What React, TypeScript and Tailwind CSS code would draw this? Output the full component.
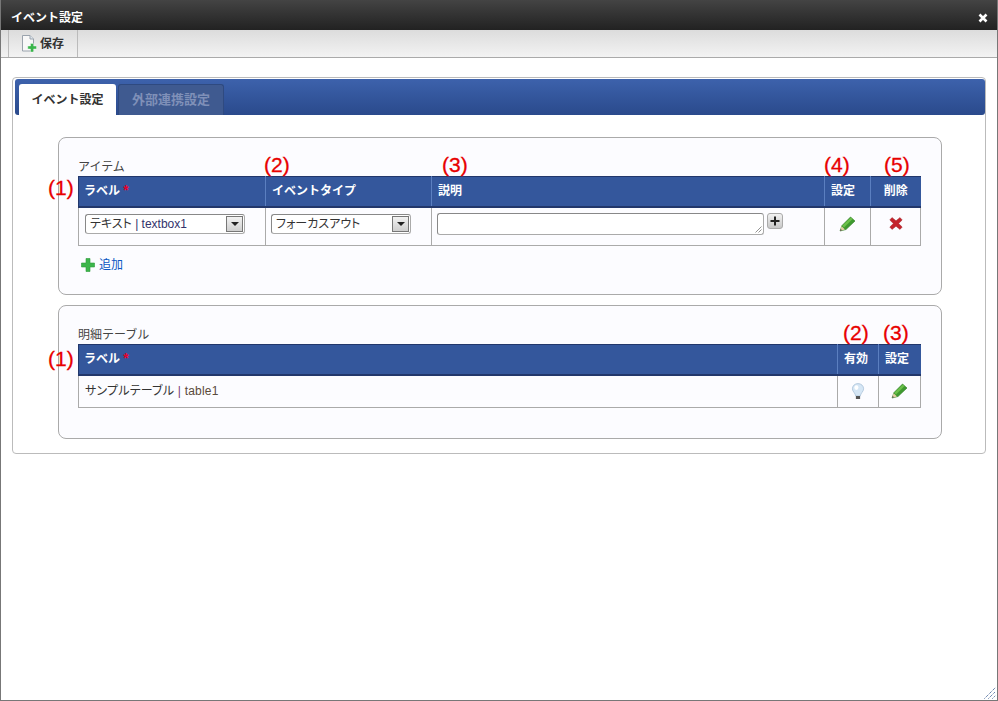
import React from 'react';

const FONT = 'font-["Liberation_Sans","Noto_Sans_CJK_JP",sans-serif]';
const PALT = "[font-feature-settings:'palt']";

const PencilIcon = () => (
  <svg width="17" height="16" viewBox="0 0 17 16">
    <path d="M1 15 L3 9.5 L11.5 1 L16 5 L7 13.5 Z" fill="#3f9a2f" stroke="#2b7a22" strokeWidth="0.6" />
    <path d="M3.2 9.8 L12 1.6 L13.6 3 L5 11.5 Z" fill="#6cc04a" />
    <path d="M1 15 L2.6 10.3 L6 13.6 Z" fill="#e3cfa4" />
    <path d="M1 15 L1.7 13 L3 14.2 Z" fill="#444" />
  </svg>
);

const CrossIcon = () => (
  <svg width="14" height="13" viewBox="0 0 14 13">
    <path
      d="M0.8 3 L3 0.6 L7 3.8 L11 0.6 L13.2 3 L9.6 6.5 L13.2 10 L11 12.4 L7 9.2 L3 12.4 L0.8 10 L4.4 6.5 Z"
      fill="#c4232c"
      stroke="#a32a2f"
      strokeWidth="0.5"
    />
  </svg>
);

const BulbIcon = () => (
  <svg width="14" height="17" viewBox="0 0 14 17">
    <path d="M7 0.6 C10.4 0.6 12.6 3 12.6 5.8 C12.6 8.6 9.6 10 9.3 13 L4.7 13 C4.4 10 1.4 8.6 1.4 5.8 C1.4 3 3.6 0.6 7 0.6 Z" fill="#d5e6f5" stroke="#a9c2d8" strokeWidth="0.8" />
    <ellipse cx="5.4" cy="4.6" rx="2" ry="2.4" fill="#ffffff" />
    <rect x="4.9" y="13" width="4.2" height="3" fill="#555" />
  </svg>
);

const GreenPlus = () => (
  <svg width="14" height="14" viewBox="0 0 14 14">
    <path d="M5 0.5 H9 V5 H13.5 V9 H9 V13.5 H5 V9 H0.5 V5 H5 Z" fill="#3cb54a" stroke="#2b9a3a" strokeWidth="0.6" />
  </svg>
);

const SaveIcon = () => (
  <svg width="16" height="18" viewBox="0 0 16 18">
    <path d="M1.5 0.5 H9 L12.5 4 V16 H1.5 Z" fill="#f8f8f8" stroke="#9aa3ad" />
    <path d="M9 0.5 V4 H12.5" fill="#dfe6ee" stroke="#9aa3ad" />
    <path d="M9.5 8.5 H12.5 V11 H15.5 V14 H12.5 V17 H9.5 V14 H6.8 V11 H9.5 Z" fill="#39b54a" stroke="#ffffff" strokeWidth="0.4" />
  </svg>
);

const CloseIcon = () => (
  <svg width="10" height="10" viewBox="0 0 10 10">
    <path d="M1.5 1.5 L8.5 8.5 M8.5 1.5 L1.5 8.5" stroke="#ffffff" strokeWidth="2.6" />
  </svg>
);

const Note = ({ n, className }: { n: number; className: string }) => (
  <span className={`absolute text-[21px] leading-5 text-[#e80000] [-webkit-text-stroke:0.3px_#e80000] font-['Liberation_Sans',sans-serif] ${className}`}>({n})</span>
);

const FakeSelect = ({ width, children }: { width: string; children: React.ReactNode }) => (
  <div className={`flex h-[20px] items-center justify-between rounded-[3px] border border-[#aaa] border-t-[#888] border-l-[#888] bg-white pl-[4px] pr-[1px] text-[12px] text-[#333] ${PALT} ${width}`}>
    <span>{children}</span>
    <span className="flex h-[16px] w-[17px] items-center justify-center border border-[#777] bg-gradient-to-b from-[#f2f2f2] to-[#cfcfcf]">
      <span className="h-0 w-0 border-x-[4px] border-t-[4px] border-x-transparent border-t-[#222]" />
    </span>
  </div>
);

const Star = () => <span className="text-[14px] leading-none text-[#e8002a]">*</span>;

const th = 'border-r border-[#5b7fc0] border-b-2 border-b-[#22376b] border-t border-t-[#22376b] bg-[#34579c] px-[6px] text-[12px] font-bold text-white text-left first:border-l first:border-l-[#22376b] first:pl-[5px] last:border-r-0';
const td = 'border border-[#aaa] text-[12px] text-[#333]';

const App: React.FC = () => {
  return (
    <div className={`relative flex h-[701px] w-[998px] flex-col border-x border-b border-[#777] bg-white ${FONT}`}>
      {/* title bar */}
      <div className="flex h-[30px] items-center justify-between bg-gradient-to-b from-[#444] to-[#222] pl-[10px] pr-[9px] pt-[5px] text-[12px] font-bold text-white">
        <span>イベント設定</span>
        <CloseIcon />
      </div>

      {/* toolbar */}
      <div className="flex h-[28px] border-b border-[#aaa] bg-gradient-to-b from-[#dcdcdc] to-[#f3f3f3] pl-[7px]">
        <div className="flex w-[70px] items-center gap-[3px] border-x border-[#bbb] pl-[12px] text-[12px] font-bold text-[#333]">
          <SaveIcon />
          <span>保存</span>
        </div>
      </div>

      <div className="px-[11px] pt-[19px]">
        <div className="h-[377px] rounded-[4px] border border-[#bbb] p-[1px]">
          {/* tab strip */}
          <div className="ml-[1px] flex h-[36px] w-[970px] items-end gap-[2px] rounded-[3px] bg-gradient-to-b from-[#3d62ac] to-[#2a4a8c] pl-[4px]">
            <div className="flex h-[31px] w-[97px] items-center justify-center rounded-t-[3px] bg-white text-[12px] font-bold text-[#333]">イベント設定</div>
            <div className="flex h-[31px] w-[106px] items-center justify-center rounded-t-[3px] border border-b-0 border-[#2f4a80] bg-[#3f5a90] text-[13px] font-bold text-[#7f90b8]">外部連携設定</div>
          </div>

          <div className="flex flex-col gap-[10px] pl-[44px] pt-[22px]">
            {/* items */}
            <section className="relative h-[158px] w-[884px] rounded-[8px] border border-[#aaa] bg-[#fcfcff] pl-[19px] pt-[21px]">
              <Note n={1} className="left-[-11px] top-[40px]" />
              <Note n={2} className="left-[205px] top-[17px]" />
              <Note n={3} className="left-[383px] top-[17px]" />
              <Note n={4} className="left-[765px] top-[17px]" />
              <Note n={5} className="left-[825px] top-[17px]" />
              <div className="h-[17px] text-[12px] leading-[17px] text-[#444]">アイテム</div>
              <table className="w-[842px] table-fixed border-collapse">
                <colgroup>
                  <col className="w-[187px]" />
                  <col className="w-[166px]" />
                  <col className="w-[393px]" />
                  <col className="w-[46px]" />
                  <col className="w-[50px]" />
                </colgroup>
                <thead>
                  <tr className="h-[30px]">
                    <th className={th}>ラベル <Star /></th>
                    <th className={th}>イベントタイプ</th>
                    <th className={th}>説明</th>
                    <th className={th}>設定</th>
                    <th className={`${th} text-center!`}>削除</th>
                  </tr>
                </thead>
                <tbody>
                  <tr className="h-[39px]">
                    <td className={`${td} px-[6px] pt-[6px] align-top`}>
                      <FakeSelect width="w-[160px]">
                        テキスト <span className="text-[#33336b]">| textbox1</span>
                      </FakeSelect>
                    </td>
                    <td className={`${td} px-[5px] pt-[6px] align-top`}>
                      <FakeSelect width="w-[140px]">フォーカスアウト</FakeSelect>
                    </td>
                    <td className={`${td} px-[5px] pt-[5px] align-top`}>
                      <div className="flex items-start gap-[3px]">
                        <div className="relative h-[22px] w-[327px] rounded-[3px] border border-[#aaa] border-t-[#888] border-l-[#888] bg-white">
                          <svg className="absolute bottom-[1px] right-[1px]" width="7" height="7" viewBox="0 0 7 7">
                            <path d="M0.5 6.5 L6.5 0.5 M3.5 6.5 L6.5 3.5" stroke="#777" strokeWidth="0.8" />
                          </svg>
                        </div>
                        <span className="flex h-[16px] w-[16px] items-center justify-center rounded-[3px] border border-[#aaa] bg-gradient-to-b from-[#f2f2f2] to-[#c8c8c8] text-[#222]">
                          <svg width="10" height="10" viewBox="0 0 10 10">
                            <path d="M5 0.5 V9.5 M0.5 5 H9.5" stroke="#222" strokeWidth="2" />
                          </svg>
                        </span>
                      </div>
                    </td>
                    <td className={`${td} pt-[8px] align-top`}>
                      <div className="flex justify-center"><PencilIcon /></div>
                    </td>
                    <td className={`${td} pt-[9px] align-top`}>
                      <div className="flex justify-center"><CrossIcon /></div>
                    </td>
                  </tr>
                </tbody>
              </table>
              <div className="mt-[10px] flex items-center gap-[4px] pl-[3px] text-[12px] text-[#0a56c2]">
                <GreenPlus />
                <span>追加</span>
              </div>
            </section>

            {/* detail table */}
            <section className="relative h-[134px] w-[884px] rounded-[8px] border border-[#aaa] bg-[#fcfcff] pl-[19px] pt-[21px]">
              <Note n={1} className="left-[-11px] top-[43px]" />
              <Note n={2} className="left-[784px] top-[17px]" />
              <Note n={3} className="left-[824px] top-[17px]" />
              <div className="h-[17px] text-[12px] leading-[17px] text-[#444]">明細テーブル</div>
              <table className="w-[843px] table-fixed border-collapse">
                <colgroup>
                  <col />
                  <col className="w-[41px]" />
                  <col className="w-[42px]" />
                </colgroup>
                <thead>
                  <tr className="h-[30px]">
                    <th className={th}>ラベル <Star /></th>
                    <th className={th}>有効</th>
                    <th className={th}>設定</th>
                  </tr>
                </thead>
                <tbody>
                  <tr className="h-[33px]">
                    <td className={`${td} px-[6px] tracking-[0.2px] ${PALT}`}>
                      サンプルテーブル <span className="text-[#7a3b7a]">|</span> <span className="text-[#5a4a3a]">table1</span>
                    </td>
                    <td className={td}>
                      <div className="flex justify-center"><BulbIcon /></div>
                    </td>
                    <td className={td}>
                      <div className="flex justify-center"><PencilIcon /></div>
                    </td>
                  </tr>
                </tbody>
              </table>
            </section>
          </div>
        </div>
      </div>

      {/* resize grip */}
      <svg className="absolute bottom-[1px] right-[1px]" width="12" height="12" viewBox="0 0 12 12">
        <path d="M0.5 11.5 L11.5 0.5 M4.5 11.5 L11.5 4.5 M8.5 11.5 L11.5 8.5" stroke="#2a4f8a" strokeWidth="1" strokeDasharray="1 1" />
      </svg>
    </div>
  );
};

export default App;
